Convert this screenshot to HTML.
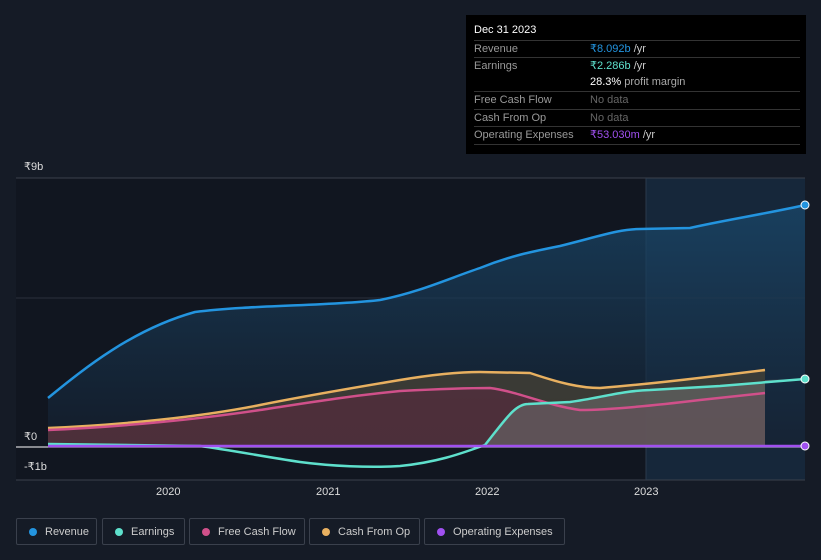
<!DOCTYPE html><html><head><style>
body{margin:0;width:821px;height:560px;background:#151b26;font-family:"Liberation Sans",sans-serif;overflow:hidden;position:relative}
.tt{position:absolute;left:466px;top:15px;width:340px;height:139px;background:#000;color:#fff;font-size:11px}
.tt .r{position:absolute;left:8px;right:6px;height:17px;line-height:17px;border-top:1px solid #333}
.tt .r span{position:absolute;left:116px}
.lab{color:#999}
.leg{position:absolute;top:518px;height:27px;border:1px solid #3a404c;border-radius:2px;color:#ccc;font-size:11px;line-height:26px;box-sizing:border-box;padding-left:28px;white-space:nowrap}
.leg i{position:absolute;left:12px;top:9px;width:8px;height:8px;border-radius:50%}
.ax{position:absolute;color:#ddd;font-size:11px}
</style></head><body>
<svg width="821" height="560" style="position:absolute;left:0;top:0">
<defs>
<linearGradient id="rg" x1="0" y1="0" x2="0" y2="1"><stop offset="0" stop-color="#1a4a6e" stop-opacity=".7"/><stop offset="1" stop-color="#152030" stop-opacity=".6"/></linearGradient>
</defs>
<rect x="16" y="178" width="789" height="302" fill="#111620"/>
<rect x="646" y="178" width="159" height="302" fill="#16273a"/>
<line x1="16" y1="178" x2="805" y2="178" stroke="#3a404c"/>
<line x1="16" y1="298" x2="805" y2="298" stroke="#2a303c"/>
<line x1="16" y1="480" x2="805" y2="480" stroke="#3a404c"/>
<line x1="646" y1="178" x2="646" y2="480" stroke="#2a3a4c"/>
<path d="M48,398 C80,372 130,330 195,312 C250,305 330,306 380,300 C420,292 450,278 480,268 C510,256 530,252 560,246 C600,236 620,229 640,229 L690,228 C720,221 770,213 805,205 L805,447 L48,447Z" fill="url(#rg)"/>
<path d="M48,428 C120,425 200,417 260,405 C300,397 340,390 400,380 C430,375 460,372 480,372 L530,373 C560,383 580,388 600,388 C650,384 700,378 765,370 L765,447 L48,447Z" fill="#4a4536" opacity=".7"/>
<path d="M48,430 C120,427 200,419 260,410 C300,404 340,397 400,391 C440,389 470,388 490,388 C520,392 545,405 580,410 C610,410 650,406 700,400 L765,393 L765,447 L48,447Z" fill="#5a2a40" opacity=".6"/>
<path d="M490,440 C505,420 515,404 528,404 L570,402 C600,398 620,391 650,390 L720,386 C770,382 805,379 805,379 L765,380 L765,447 L482,447Z" fill="#6a6a6a" opacity=".6"/>
<path d="M48,398 C80,372 130,330 195,312 C250,305 330,306 380,300 C420,292 450,278 480,268 C510,256 530,252 560,246 C600,236 620,229 640,229 L690,228 C720,221 770,213 805,205" fill="none" stroke="#2394df" stroke-width="2.5"/>
<path d="M48,428 C120,425 200,417 260,405 C300,397 340,390 400,380 C430,375 460,372 480,372 L530,373 C560,383 580,388 600,388 C650,384 700,378 765,370" fill="none" stroke="#e8b060" stroke-width="2.5"/>
<path d="M48,430 C120,427 200,419 260,410 C300,404 340,397 400,391 C440,389 470,388 490,388 C520,392 545,405 580,410 C610,410 650,406 700,400 L765,393" fill="none" stroke="#d0508a" stroke-width="2.5"/>
<path d="M48,444 L200,446 C230,450 260,456 300,462 C330,466 370,468 400,466 C440,462 465,452 485,445 C505,420 515,404 528,404 L570,402 C600,398 620,391 650,390 L720,386 C770,382 805,379 805,379" fill="none" stroke="#5ee0cc" stroke-width="2.5"/>
<line x1="16" y1="447" x2="805" y2="447" stroke="#fff" stroke-width="1"/>
<line x1="48" y1="446" x2="805" y2="446" stroke="#a050f0" stroke-width="2.5"/>
<circle cx="805" cy="205" r="4" fill="#2394df" stroke="#fff"/>
<circle cx="805" cy="379" r="4" fill="#5ee0cc" stroke="#fff"/>
<circle cx="805" cy="446" r="4" fill="#a050f0" stroke="#fff"/>
</svg>
<div class="ax" style="left:24px;top:160px">₹9b</div>
<div class="ax" style="left:24px;top:430px">₹0</div>
<div class="ax" style="left:24px;top:460px">-₹1b</div>
<div class="ax" style="left:156px;top:486px">2020</div>
<div class="ax" style="left:316px;top:486px">2021</div>
<div class="ax" style="left:475px;top:486px">2022</div>
<div class="ax" style="left:634px;top:486px">2023</div>
<div class="tt">
<div style="position:absolute;left:8px;top:9px;font-size:11px">Dec 31 2023</div>
<div class="r" style="top:25px"><b class="lab" style="font-weight:normal">Revenue</b><span style="color:#2394df">₹8.092b <b style="color:#ccc;font-weight:normal">/yr</b></span></div>
<div class="r" style="top:42px"><b class="lab" style="font-weight:normal">Earnings</b><span style="color:#5ee0cc">₹2.286b <b style="color:#ccc;font-weight:normal">/yr</b></span></div>
<div class="r" style="top:59px;border:none"><span>28.3% <b style="color:#aaa;font-weight:normal">profit margin</b></span></div>
<div class="r" style="top:76px"><b class="lab" style="font-weight:normal">Free Cash Flow</b><span style="color:#666">No data</span></div>
<div class="r" style="top:94px"><b class="lab" style="font-weight:normal">Cash From Op</b><span style="color:#666">No data</span></div>
<div class="r" style="top:111px"><b class="lab" style="font-weight:normal">Operating Expenses</b><span style="color:#a050f0">₹53.030m <b style="color:#ccc;font-weight:normal">/yr</b></span></div>
<div class="r" style="top:129px;height:0"></div>
</div>
<div class="leg" style="left:16px;width:81px"><i style="background:#2394df"></i>Revenue</div>
<div class="leg" style="left:102px;width:83px"><i style="background:#5ee0cc"></i>Earnings</div>
<div class="leg" style="left:189px;width:116px"><i style="background:#d0508a"></i>Free Cash Flow</div>
<div class="leg" style="left:309px;width:111px"><i style="background:#e8b060"></i>Cash From Op</div>
<div class="leg" style="left:424px;width:141px"><i style="background:#a050f0"></i>Operating Expenses</div>
</body></html>
